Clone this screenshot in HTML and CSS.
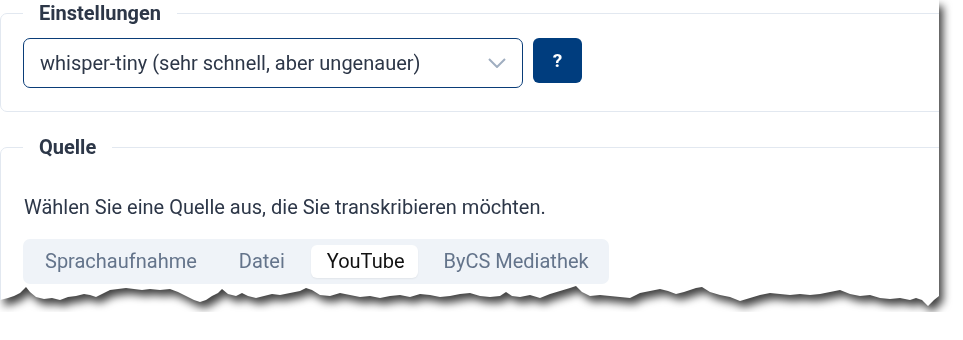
FILE: index.html
```html
<!DOCTYPE html>
<html lang="de">
<head>
    <meta charset="UTF-8">
    <title>Transkription</title>
    <link rel="stylesheet" href="styles.css">
</head>
<body>
    <div class="sheet">
        <div class="paper">
            <fieldset class="box">
                <legend>Einstellungen</legend>
                <div class="model-row">
                    <div class="select">
                        <span>whisper-tiny (sehr schnell, aber ungenauer)</span>
                        <svg class="chevron" width="18" height="10" viewBox="0 0 18 10"><path d="M1 1 L9 9 L17 1" fill="none" stroke="#a0aec0" stroke-width="2"/></svg>
                    </div>
                    <button class="help">?</button>
                </div>
            </fieldset>
            <fieldset class="box source">
                <legend>Quelle</legend>
                <p class="hint">Wählen Sie eine Quelle aus, die Sie transkribieren möchten.</p>
                <div class="tabs">
                    <span class="tab">Sprachaufnahme</span>
                    <span class="tab">Datei</span>
                    <span class="tab active">YouTube</span>
                    <span class="tab">ByCS Mediathek</span>
                </div>
            </fieldset>
        </div>
    </div>
</body>
</html>
```

FILE: styles.css
```css
body {
    margin: 0;
    background: #fff;
    font-family: Roboto, "Liberation Sans", Arial, sans-serif;
    color: #2d3748;
}
.sheet {
    width: 939px;
    height: 312px;
    filter: drop-shadow(4px 6px 4px rgba(0, 0, 0, 0.75));
}
.paper {
    width: 939px;
    height: 312px;
    background: #fff;
    overflow: hidden;
    clip-path: polygon(0 0, 939px 0, 939px 296px, 934px 300px, 928px 306px, 922px 300px, 916px 298px, 910px 300px, 900px 298px, 890px 299px, 880px 298px, 870px 295px, 860px 296px, 850px 294px, 840px 290px, 830px 292px, 820px 294px, 810px 295px, 800px 294px, 790px 295px, 780px 294px, 770px 293px, 760px 295px, 750px 298px, 740px 301px, 730px 297px, 720px 295px, 710px 292px, 702px 287px, 696px 288px, 690px 290px, 684px 292px, 676px 294px, 668px 291px, 660px 289px, 650px 291px, 640px 293px, 630px 298px, 620px 297px, 610px 296px, 600px 295px, 590px 296px, 582px 292px, 576px 286px, 570px 288px, 560px 291px, 550px 294px, 540px 298px, 530px 295px, 520px 297px, 512px 296px, 506px 292px, 500px 296px, 490px 297px, 480px 296px, 470px 293px, 460px 294px, 450px 296px, 440px 297px, 430px 295px, 420px 294px, 410px 297px, 400px 295px, 390px 296px, 380px 298px, 370px 296px, 360px 297px, 350px 295px, 340px 293px, 330px 296px, 320px 295px, 312px 290px, 306px 288px, 300px 291px, 290px 293px, 280px 295px, 272px 294px, 264px 296px, 256px 298px, 248px 296px, 242px 293px, 236px 296px, 228px 294px, 222px 289px, 218px 293px, 212px 296px, 206px 300px, 200px 302px, 194px 300px, 186px 296px, 178px 292px, 170px 289px, 160px 290px, 150px 289px, 142px 290px, 134px 289px, 126px 288px, 118px 289px, 110px 290px, 104px 293px, 96px 297px, 90px 295px, 84px 294px, 76px 296px, 68px 297px, 60px 300px, 52px 298px, 44px 299px, 36px 297px, 30px 292px, 26px 287px, 20px 293px, 14px 296px, 8px 298px, 0 300px);
}
.box {
    width: 980px;
    margin: 0;
    padding: 12px 22px 23px;
    border: 1px solid #e2e8f0;
    border-radius: 7px;
    box-sizing: border-box;
}
.box legend {
    padding: 0 16px;
    font-size: 20px;
    font-weight: 700;
    line-height: 26px;
    color: #2d3748;
}
.source {
    margin-top: 22px;
    padding-top: 35px;
}
.model-row {
    display: flex;
    align-items: flex-start;
    gap: 10px;
}
.select {
    width: 500px;
    height: 50px;
    border: 1px solid #0a3d78;
    border-radius: 7px;
    box-sizing: border-box;
    display: flex;
    align-items: center;
    justify-content: space-between;
    padding: 0 16px 0 16px;
    font-size: 20px;
}
.help {
    width: 49px;
    height: 45px;
    border: none;
    border-radius: 6px;
    background: #003d7e;
    color: #fff;
    font-family: inherit;
    font-size: 19px;
    font-weight: 700;
}
.hint {
    margin: 0 0 20px 1px;
    font-size: 20px;
    line-height: 24px;
}
.tabs {
    display: inline-flex;
    gap: 10px;
    padding: 6px 4px 6px 6px;
    background: #eff3f8;
    border-radius: 7px;
}
.tab {
    padding: 0 16px;
    height: 33px;
    line-height: 33px;
    font-size: 20px;
    color: #64748b;
    border-radius: 6px;
}
.tab.active {
    padding: 0 13px 0 16px;
    background: #fff;
    color: #111;
    box-shadow: 0 1px 2px rgba(0, 0, 0, 0.06);
}
```
